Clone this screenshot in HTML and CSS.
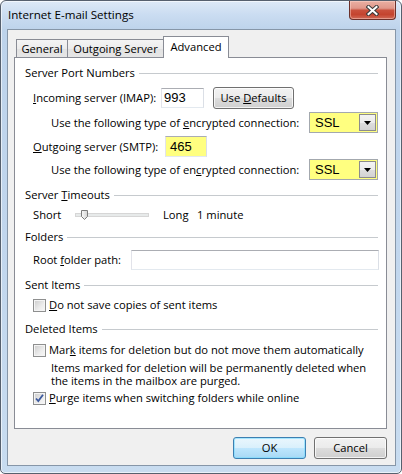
FILE: index.html
```html
<!DOCTYPE html>
<html>
<head>
<meta charset="utf-8">
<title>Internet E-mail Settings</title>
<link rel="stylesheet" href="styles.css">
</head>
<body>
<div class="window">
  <div class="titlebar">
    <span class="title">Internet E-mail Settings</span>
    <div class="close">
      <svg width="13" height="11" viewBox="0 0 13 11"><path d="M2.5 2 L10.5 9 M10.5 2 L2.5 9" stroke="#3a3a3a" stroke-width="4" stroke-linecap="square"/><path d="M2.5 2 L10.5 9 M10.5 2 L2.5 9" stroke="#ffffff" stroke-width="2" stroke-linecap="square"/></svg>
    </div>
  </div>
  <div class="client">
    <div class="tabs">
      <div class="tab tab-general">General</div>
      <div class="tab tab-outgoing">Outgoing Server</div>
      <div class="tab tab-advanced active">Advanced</div>
    </div>
    <div class="panel">
      <div class="ghead"><span>Server Port Numbers</span><i class="rule"></i></div>
      <div class="row r-in">
        <span class="lbl lbl-in"><u>I</u>ncoming server (IMAP):</span>
        <div class="field f-in">993</div>
        <div class="btn btn-defaults"><span>Use <u>D</u>efaults</span></div>
      </div>
      <div class="row sub r-enc1">
        <span>Use the following type of <u>e</u>ncrypted connection:</span>
        <div class="select"><span>SSL</span><span class="drop"><svg width="7" height="4" viewBox="0 0 7 4"><path d="M0 0 H7 L3.5 4 Z" fill="#000"/></svg></span></div>
      </div>
      <div class="row r-out">
        <span class="lbl lbl-out"><u>O</u>utgoing server (SMTP):</span>
        <div class="field f-out">465</div>
      </div>
      <div class="row sub r-enc2">
        <span>Use the following type of en<u>c</u>rypted connection:</span>
        <div class="select"><span>SSL</span><span class="drop"><svg width="7" height="4" viewBox="0 0 7 4"><path d="M0 0 H7 L3.5 4 Z" fill="#000"/></svg></span></div>
      </div>

      <div class="ghead h-timeouts"><span>Server <u>T</u>imeouts</span><i class="rule"></i></div>
      <div class="row r-slider">
        <span class="s-short">Short</span>
        <div class="track">
          <svg class="thumb" width="7" height="10" viewBox="0 0 7 10"><defs><linearGradient id="tg" x1="0" y1="0" x2="1" y2="0"><stop offset="0" stop-color="#fafafa"/><stop offset="1" stop-color="#d4d4d4"/></linearGradient></defs><path d="M0.5 0.5 H6.5 V6.5 L3.5 9.5 L0.5 6.5 Z" fill="url(#tg)" stroke="#7d7d7d"/></svg>
        </div>
        <span class="s-long">Long</span>
        <span>1 minute</span>
      </div>

      <div class="ghead h-folders"><span>Folders</span><i class="rule"></i></div>
      <div class="row r-root">
        <span class="lbl lbl-root">Root <u>f</u>older path:</span>
        <div class="field f-root"></div>
      </div>

      <div class="ghead h-sent"><span>Sent Items</span><i class="rule"></i></div>
      <div class="row r-cb1">
        <span class="cb"></span>
        <span class="cbtext"><u>D</u>o not save copies of sent items</span>
      </div>

      <div class="ghead h-deleted"><span>Deleted Items</span><i class="rule"></i></div>
      <div class="row r-cb2">
        <span class="cb"></span>
        <span class="cbtext">Mar<u>k</u> items for deletion but do not move them automatically</span>
      </div>
      <div class="note">
        <div class="note-line">Items marked for deletion will be permanently deleted when</div>
        <div class="note-line">the items in the mailbox are purged.</div>
      </div>
      <div class="row r-cb3">
        <span class="cb checked"><svg width="11" height="11" viewBox="0 0 11 11"><path d="M2 5.5 L4.3 8 L9 1.8" fill="none" stroke="#3d5a9e" stroke-width="1.8"/></svg></span>
        <span class="cbtext"><u>P</u>urge items when switching folders while online</span>
      </div>
    </div>
    <div class="buttons">
      <div class="btn btn-ok">OK</div>
      <div class="btn btn-cancel">Cancel</div>
    </div>
  </div>
</div>
</body>
</html>
```

FILE: styles.css
```css
* { box-sizing: border-box; margin: 0; padding: 0; }
html, body { width: 402px; height: 474px; overflow: hidden; }
body {
  font-family: "Open Sans", "Noto Sans", sans-serif;
  font-size: 11.2px;
  line-height: 14px;
  color: #000;
  background: #ffffff;
}
u { text-decoration: underline; text-underline-offset: 1px; text-decoration-thickness: 1px; }

.window {
  width: 402px;
  height: 474px;
  border: 1px solid #56606e;
  border-radius: 6px 6px 5px 5px;
  padding: 0 5px 7px 6px;
  display: flex;
  flex-direction: column;
  background: linear-gradient(180deg, #dde9f7 0, #cadcf1 14px, #bdd3eb 29px, #c1d6ed 240px, #c8dcf0 100%);
  box-shadow: inset 0 0 0 1px rgba(255, 255, 255, 0.6);
}

.titlebar {
  flex: none;
  height: 28px;
  display: flex;
  justify-content: space-between;
  align-items: flex-start;
}
.title {
  margin-top: 7px;
  padding-left: 1px;
  font-size: 11.6px;
  color: #000;
}
.close {
  width: 47px;
  height: 19px;
  border: 1px solid #6b302a;
  border-top: none;
  border-radius: 0 0 4px 4px;
  background: linear-gradient(180deg, #eab0a3 0, #e0978a 40%, #c9503c 52%, #c4442f 75%, #d06a57 100%);
  box-shadow: inset 0 0 0 1px rgba(255, 220, 210, 0.45);
  display: flex;
  align-items: center;
  justify-content: center;
}

.client {
  flex: 1;
  border: 1px solid #8696a8;
  background: #f0f0f0;
  padding: 6px 8px 0 6px;
  display: flex;
  flex-direction: column;
}

.tabs {
  height: 21px;
  display: flex;
  align-items: flex-end;
  padding-left: 2px;
}
.tab {
  height: 18px;
  border: 1px solid #898c95;
  border-bottom: none;
  background: linear-gradient(180deg, #f4f4f4 0, #ececec 50%, #e2e2e2 51%, #e6e6e6 100%);
  display: flex;
  align-items: center;
  justify-content: center;
  white-space: nowrap;
}
.tab-general { width: 52px; }
.tab-outgoing { width: 97px; margin-left: -1px; }
.tab-advanced { width: 66px; margin-left: -1px; }
.tab.active {
  height: 22px;
  margin-bottom: -1px;
  padding-bottom: 1px;
  background: #ffffff;
  position: relative;
  z-index: 1;
}

.panel {
  height: 372px;
  border: 1px solid #898c95;
  background: #ffffff;
  padding: 7px 8px 0 10px;
  display: flex;
  flex-direction: column;
}

.ghead {
  height: 16px;
  display: flex;
  align-items: center;
  white-space: nowrap;
}
.ghead .rule {
  flex: 1;
  height: 1px;
  margin-left: 4px;
  background: #c6cace;
}

.row {
  display: flex;
  align-items: center;
  padding-left: 8px;
  white-space: nowrap;
}
.row.sub { padding-left: 26px; }

.r-in { height: 22px; margin-top: 6px; }
.r-enc1 { height: 21px; margin-top: 3px; }
.r-out { height: 21px; margin-top: 3px; }
.r-enc2 { height: 21px; margin-top: 2px; }
.h-timeouts { margin-top: 7px; }
.r-slider { height: 16px; margin-top: 4px; }
.h-folders { margin-top: 6px; }
.r-root { height: 20px; margin-top: 5px; }
.h-sent { margin-top: 7px; }
.r-cb1 { height: 16px; margin-top: 4px; }
.h-deleted { margin-top: 8px; }
.r-cb2 { height: 16px; margin-top: 5px; }
.note { margin-top: 3px; padding-left: 26px; white-space: nowrap; }
.note-line { height: 13px; line-height: 13px; }
.r-cb3 { height: 16px; margin-top: 3px; }

.lbl-in { width: 128px; }
.lbl-out { width: 132px; }
.lbl-root { width: 98px; }

.field {
  height: 20px;
  border: 1px solid;
  border-color: #abadb3 #dbdfe6 #e3e9ef #e2e3ea;
  background: #ffffff;
  font-family: "Liberation Sans", Arial, sans-serif;
  font-size: 13px;
  display: flex;
  align-items: center;
  padding-left: 2px;
}
.f-in { width: 43px; }
.f-out { width: 42px; height: 21px; background: #ffff80; padding-left: 4px; }
.f-root { flex: 1; margin-right: -1px; }

.select {
  margin-left: auto;
  width: 69px;
  height: 21px;
  border: 1px solid #a3a8ae;
  background: #ffff80;
  font-family: "Liberation Sans", Arial, sans-serif;
  font-size: 13px;
  display: flex;
  align-items: center;
  justify-content: space-between;
  padding: 0 1px 0 5px;
}
.drop {
  width: 17px;
  height: 17px;
  border: 1px solid #8c8c8c;
  background: linear-gradient(180deg, #f4f4f4 0, #ececec 50%, #dedede 51%, #d3d3d3 100%);
  display: flex;
  align-items: center;
  justify-content: center;
}

.btn {
  height: 22px;
  border: 1px solid #707070;
  border-radius: 3px;
  background: linear-gradient(180deg, #f2f2f2 0, #ebebeb 50%, #dddddd 51%, #cfcfcf 100%);
  box-shadow: inset 0 0 0 1px rgba(255, 255, 255, 0.75);
  display: flex;
  align-items: center;
  justify-content: center;
  white-space: nowrap;
}
.btn-defaults { width: 81px; margin-left: 9px; }

.s-short { width: 42px; }
.track {
  width: 74px;
  height: 4px;
  border: 1px solid #d6d6d6;
  background: #e7eaea;
  position: relative;
}
.thumb { position: absolute; left: 5px; top: -4px; }
.s-long { margin-left: 14px; width: 34px; }

.cb {
  width: 13px;
  height: 13px;
  border: 1px solid #8e8f8f;
  background: linear-gradient(135deg, #cbcbcb 0, #ececec 60%, #f8f8f8 100%);
  box-shadow: inset 0 0 0 1px #f4f4f4;
  display: flex;
  align-items: center;
  justify-content: center;
  flex: none;
}
.cbtext { margin-left: 3px; }

.buttons {
  margin-top: 8px;
  display: flex;
  justify-content: flex-end;
  gap: 8px;
}
.btn-ok {
  width: 73px;
  border-color: #3c7fb1;
  background: linear-gradient(180deg, #eaf6fd 0, #d9f0fc 50%, #bee6fd 51%, #a7d9f5 100%);
  box-shadow: inset 0 0 0 1px rgba(120, 220, 255, 0.6);
}
.btn-cancel { width: 73px; }
```
